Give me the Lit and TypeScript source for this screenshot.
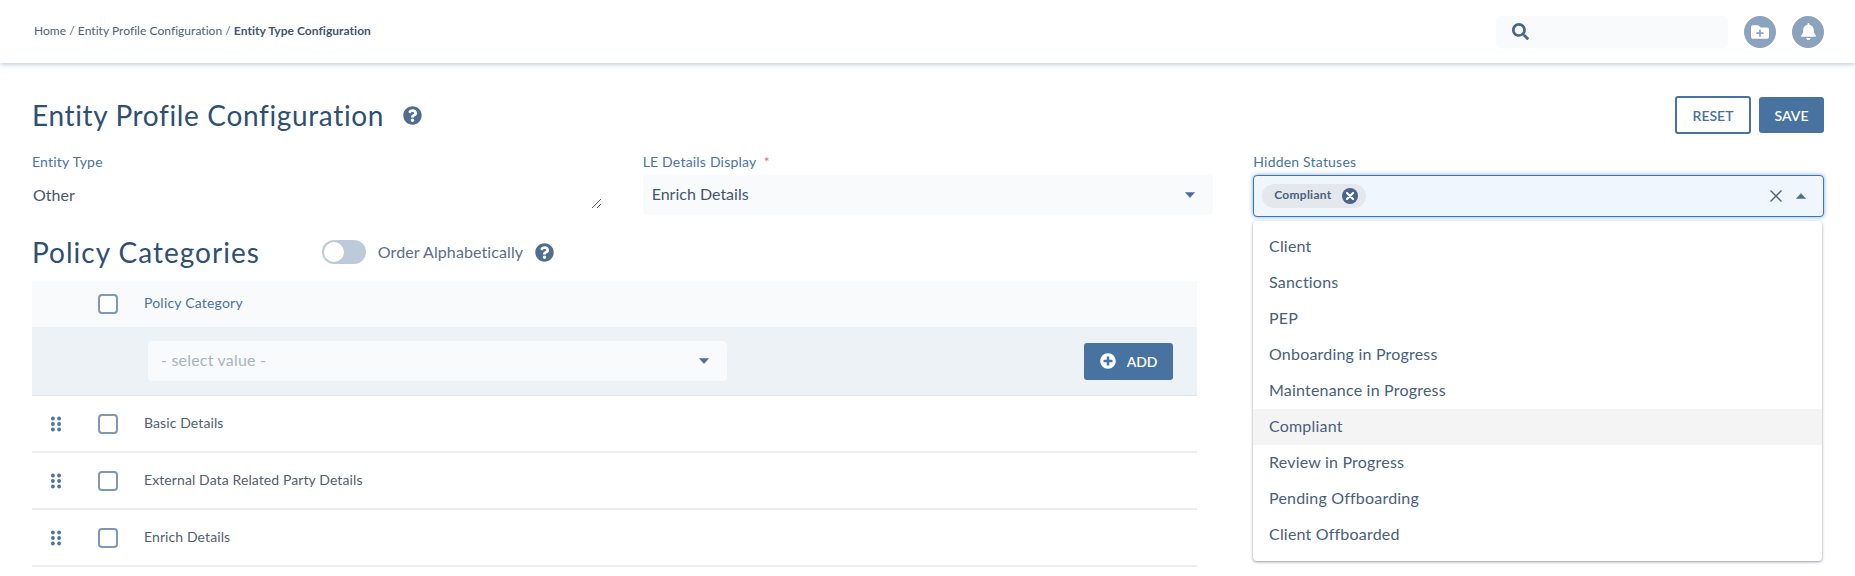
import { LitElement, html, css, svg } from "lit";
import { customElement } from "lit/decorators.js";

const qPath = "M504 256c0 136.997-111.043 248-248 248S8 392.997 8 256C8 119.083 119.043 8 256 8s248 111.083 248 248zM262.655 90c-54.497 0-89.255 22.957-116.549 63.758-3.536 5.286-2.353 12.415 2.715 16.258l34.699 26.31c5.205 3.947 12.621 3.008 16.665-2.122 17.864-22.658 30.113-35.797 57.303-35.797 20.429 0 45.698 13.148 45.698 32.958 0 14.976-12.363 22.667-32.534 33.976C247.128 238.528 216 254.941 216 296v4c0 6.627 5.373 12 12 12h56c6.627 0 12-5.373 12-12v-1.333c0-28.462 83.186-29.647 83.186-106.667 0-58.002-60.165-102-116.531-102zM256 338c-25.365 0-46 20.635-46 46 0 25.364 20.635 46 46 46s46-20.636 46-46c0-25.365-20.635-46-46-46z";
const help = () => html`<svg class="help" viewBox="0 0 512 512"><path d=${qPath}></path></svg>`;
const caret = (up = false) => html`<svg class="caret" viewBox="0 0 10 6"><path d=${up ? "M5 .4 9.6 5.6H.4Z" : "M5 5.6 .4 .4H9.6Z"} stroke-linejoin="round"></path></svg>`;
const check = () => html`<span class="check"></span>`;
const grip = () => html`<svg class="grip" viewBox="0 0 10 16">${[2.5, 8, 13.5].flatMap((y) => [1.9, 8.1].map((x) => svg`<circle cx=${x} cy=${y} r="1.9"></circle>`))}</svg>`;

const options = ["Client", "Sanctions", "PEP", "Onboarding in Progress", "Maintenance in Progress", "Compliant", "Review in Progress", "Pending Offboarding", "Client Offboarded"];
const rows = ["Basic Details", "External Data Related Party Details", "Enrich Details"];

@customElement("app-root")
export class AppRoot extends LitElement {
  static styles = css`
    :host { display: block; height: 576px; overflow: hidden; background: #fff; font-family: "Lato", "Noto Sans", sans-serif; color: #3f5a7a; position: relative; }
    * { box-sizing: border-box; }
    .t { margin-bottom: 3px; }
    .top { height: 63px; background: #fff; box-shadow: 0 1px 5px rgba(90,120,155,.45); display: flex; align-items: center; padding: 0 31px 0 34px; position: relative; }
    .crumbs { font-size: 12px; color: #4c627c; flex: 1; letter-spacing: .04px; margin-bottom: 2px; }
    .crumbs b { font-weight: 700; color: #3f5573; }
    .search { width: 232px; height: 32px; background: #f8fafc; border-radius: 4px; display: flex; align-items: center; padding-left: 16px; margin-right: 16px; }
    .search svg { width: 17px; height: 17px; fill: #48668c; }
    .round { width: 32px; height: 32px; border-radius: 50%; background: #8ba3bd; display: flex; align-items: center; justify-content: center; }
    .round svg { fill: #fff; }
    .round + .round { margin-left: 16px; }
    main { padding: 33px 31px 0 32px; position: relative; }
    .head { display: flex; align-items: center; height: 38px; }
    h1, h2 { margin: 0; font-weight: 400; font-size: 28px; color: #2f4f73; font-family: "Lato", sans-serif; line-height: 38px; white-space: nowrap; }
    h1 { letter-spacing: .64px; }
    h2 { letter-spacing: 1px; }
    .head h1 { flex: none; }
    .head .help { margin-left: 19px; }
    .help { width: 19px; height: 19px; fill: #4f6d91; flex: none; display: block; }
    .actions { margin-left: auto; display: flex; gap: 8px; align-items: center; }
    button { font-family: inherit; font-size: 14px; font-weight: 600; border-radius: 3px; padding: 0; }
    .reset { width: 76px; height: 38px; background: #fff; color: #48729f; border: 2px solid #48729f; }
    .save { width: 65px; height: 36px; background: #48729f; color: #fff; border: 0; }
    .form { display: grid; grid-template-columns: repeat(3, 570.33px); column-gap: 40.33px; margin-top: 18px; }
    label { display: block; font-size: 14px; line-height: 20px; color: #4a73a1; height: 23px; letter-spacing: .2px; }
    label i { color: #ef6a72; font-style: normal; margin-left: 4px; }
    .ta { height: 40px; font-size: 16px; color: #44566c; padding: 0 0 0 1px; display: flex; align-items: center; position: relative; }
    .ta .t { margin-bottom: 1px; }
    .ta svg { position: absolute; right: 1px; bottom: 7px; width: 9px; height: 9px; stroke: #555; fill: none; }
    .sel { height: 40px; background: #f8fafc; border-radius: 4px; display: flex; align-items: center; justify-content: space-between; padding: 0 18px 0 9px; font-size: 16px; color: #44566c; }
    .caret { width: 10px; height: 6px; fill: #4f6d91; stroke: #4f6d91; stroke-width: .5; }
    .multi { height: 42px; background: #eff6fd; border: 1.5px solid #3f74ad; border-radius: 4px; box-shadow: 0 0 4px rgba(80,150,220,.8); display: flex; align-items: center; padding: 0 17px 0 8px; }
    .chip { width: 104px; height: 24px; background: #e4e8ed; border-radius: 12px; display: flex; align-items: center; padding: 0 8px 0 12px; font-size: 12px; font-weight: 700; color: #48607c; justify-content: space-between; letter-spacing: .25px; }
    .chip svg { width: 16px; height: 16px; }
    .clear { margin-left: auto; margin-right: 14px; width: 12px; height: 12px; stroke: #4d5d70; stroke-width: 1.3; fill: none; display: block; }
    .policy { display: flex; align-items: center; height: 38px; margin-top: 16px; }
    .toggle { width: 44px; height: 24px; border-radius: 12px; background: #bccad9; margin-left: 62px; padding: 2px; flex: none; }
    .toggle span { display: block; width: 20px; height: 20px; border-radius: 50%; background: #fff; }
    .order { margin: 0 12px 1px 12px; font-size: 16px; color: #5a7089; white-space: nowrap; letter-spacing: .1px; }
    .table { width: 1165px; margin-top: 10px; }
    .hrow { height: 46px; background: #f8fafc; display: flex; align-items: center; font-size: 14px; color: #4a73a1; padding-left: 66px; letter-spacing: .2px; }
    .check { width: 20px; height: 20px; border: 2px solid #7e98b6; border-radius: 4px; background: #fff; flex: none; display: block; margin-right: 26px; }
    .add { height: 69px; background: #edf2f6; border-bottom: 1px solid #dfe5ea; display: flex; align-items: center; padding: 0 24px 0 116px; justify-content: space-between; }
    .add .sel { width: 579px; color: #a9b4c1; padding: 0 18px 0 13px; letter-spacing: .2px; }
    .addbtn { width: 89px; height: 37px; background: #48729f; color: #fff; border: 0; display: flex; align-items: center; justify-content: center; gap: 11px; font-size: 14px; letter-spacing: -.2px; }
    .addbtn svg { width: 16px; height: 16px; fill: #fff; }
    .row { height: 57px; border-bottom: 2px solid #ebeef1; display: flex; align-items: center; font-size: 14px; color: #54606f; padding-left: 19px; letter-spacing: .1px; }
    .grip { width: 10px; height: 16px; fill: #48729f; margin-right: 37px; flex: none; }
    .drop { position: absolute; left: 1253px; top: 221px; width: 569px; height: 340px; background: #fff; border-radius: 4px; padding: 8px 0; box-shadow: 0 1px 3px rgba(60,70,85,.55); }
    .opt { height: 36px; display: flex; align-items: center; padding-left: 16px; font-size: 16px; color: #48607c; letter-spacing: .2px; }
    .opt.on { background: #f4f4f4; }
  `;

  render() {
    return html`
      <div class="top">
        <div class="crumbs">Home / Entity Profile Configuration / <b>Entity Type Configuration</b></div>
        <div class="search"><svg viewBox="0 0 512 512"><path d="M505 442.7L405.3 343c-4.5-4.5-10.6-7-17-7H372c27.6-35.3 44-79.7 44-128C416 93.1 322.9 0 208 0S0 93.1 0 208s93.1 208 208 208c48.3 0 92.7-16.4 128-44v16.3c0 6.4 2.5 12.5 7 17l99.7 99.7c9.4 9.4 24.6 9.4 33.9 0l28.3-28.3c9.4-9.4 9.4-24.6.1-34zM208 336c-70.7 0-128-57.2-128-128 0-70.7 57.2-128 128-128 70.7 0 128 57.2 128 128 0 70.7-57.2 128-128 128z"></path></svg></div>
        <div class="round"><svg width="18" height="18" viewBox="0 0 512 512"><path d="M464,128H272L208,64H48A48,48,0,0,0,0,112V400a48,48,0,0,0,48,48H464a48,48,0,0,0,48-48V176A48,48,0,0,0,464,128ZM359.5,296a16,16,0,0,1-16,16h-64v64a16,16,0,0,1-16,16h-16a16,16,0,0,1-16-16V312h-64a16,16,0,0,1-16-16V280a16,16,0,0,1,16-16h64V200a16,16,0,0,1,16-16h16a16,16,0,0,1,16,16v64h64a16,16,0,0,1,16,16Z"></path></svg></div>
        <div class="round"><svg width="15" height="17" viewBox="0 0 448 512"><path d="M224 512c35.32 0 63.97-28.65 63.97-64H160.03c0 35.35 28.65 64 63.97 64zm215.39-149.71c-19.32-20.76-55.47-51.99-55.47-154.29 0-77.7-54.48-139.9-127.94-155.16V32c0-17.67-14.32-32-31.98-32s-31.98 14.33-31.98 32v20.84C118.56 68.1 64.08 130.3 64.08 208c0 102.3-36.15 133.53-55.47 154.29-6 6.45-8.66 14.16-8.61 21.71.11 16.4 12.98 32 32.1 32h383.8c19.12 0 32-15.6 32.1-32 .05-7.55-2.61-15.27-8.61-21.71z"></path></svg></div>
      </div>
      <main>
        <div class="head">
          <h1>Entity Profile Configuration</h1>${help()}
          <div class="actions"><button class="reset">RESET</button><button class="save">SAVE</button></div>
        </div>
        <div class="form">
          <div>
            <label>Entity Type</label>
            <div class="ta"><span class="t">Other</span><svg viewBox="0 0 9 9"><path d="M0 9 9 0M5 9 9 5"></path></svg></div>
          </div>
          <div>
            <label>LE Details Display <i>*</i></label>
            <div class="sel"><span class="t">Enrich Details</span> ${caret()}</div>
          </div>
          <div>
            <label>Hidden Statuses</label>
            <div class="multi">
              <div class="chip"><span class="t">Compliant</span>
                <svg viewBox="0 0 16 16"><circle cx="8" cy="8" r="8" fill="#48668c"></circle><path d="M5 5l6 6M11 5l-6 6" stroke="#fff" stroke-width="2.2" stroke-linecap="round"></path></svg>
              </div>
              <svg class="clear" viewBox="0 0 12 12"><path d="M.5.5l11 11M11.5.5l-11 11"></path></svg>
              ${caret(true)}
            </div>
          </div>
        </div>
        <div class="policy">
          <h2>Policy Categories</h2>
          <div class="toggle"><span></span></div>
          <span class="order">Order Alphabetically</span>${help()}
        </div>
        <div class="table">
          <div class="hrow">${check()}<span class="t">Policy Category</span></div>
          <div class="add">
            <div class="sel"><span class="t">- select value -</span> ${caret()}</div>
            <button class="addbtn"><svg viewBox="0 0 512 512"><path d="M256 8C119 8 8 119 8 256s111 248 248 248 248-111 248-248S393 8 256 8zm144 276c0 6.6-5.4 12-12 12h-92v92c0 6.6-5.4 12-12 12h-56c-6.6 0-12-5.4-12-12v-92h-92c-6.6 0-12-5.4-12-12v-56c0-6.6 5.4-12 12-12h92v-92c0-6.6 5.4-12 12-12h56c6.6 0 12 5.4 12 12v92h92c6.6 0 12 5.4 12 12v56z"></path></svg>ADD</button>
          </div>
          ${rows.map((r) => html`<div class="row">${grip()}${check()}<span class="t">${r}</span></div>`)}
        </div>
      </main>
      <div class="drop">
        ${options.map((o) => html`<div class="opt ${o === "Compliant" ? "on" : ""}"><span class="t">${o}</span></div>`)}
      </div>
    `;
  }
}
